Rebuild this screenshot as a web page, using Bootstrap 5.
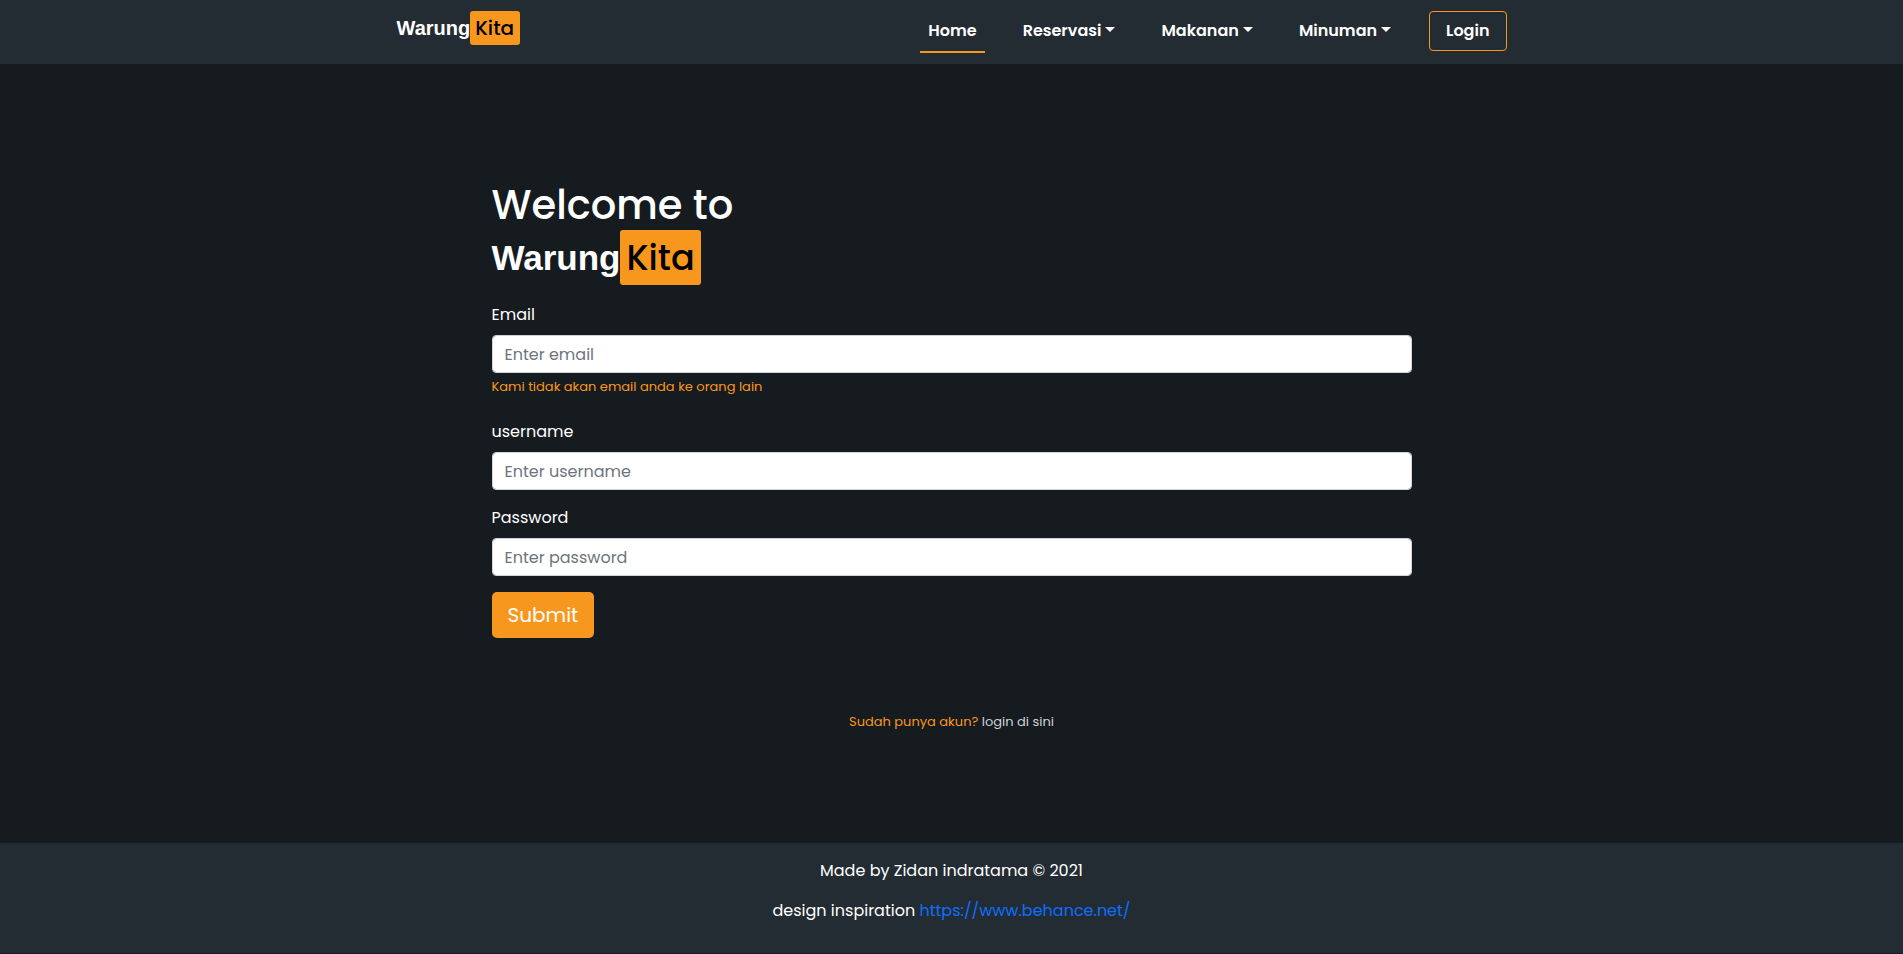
<!DOCTYPE html>
<html lang="id">
<head>
<meta charset="utf-8">
<meta name="viewport" content="width=device-width, initial-scale=1">
<title>WarungKita</title>
<link href="https://cdn.jsdelivr.net/npm/bootstrap@5.3.0/dist/css/bootstrap.min.css" rel="stylesheet">
<style>
  :root { --wk-orange: #f8971e; --wk-panel: #242c33; --wk-dark: #161b1f; }
  body {
    font-family: Poppins, Inter, sans-serif;
    font-size: 16px; line-height: 24px;
    background: var(--wk-dark); color: #fff;
  }
  .site-width { max-width: 1140px; --bs-gutter-x: 30px; }
  .site-nav { background: var(--wk-panel); padding: 11px 0; }
  .site-nav .navbar-nav { gap: 30px; }
  .site-nav .nav-link { color: #fff; font-weight: 600; border-bottom: 2px solid transparent; }
  .site-nav .nav-link:hover, .site-nav .nav-link.active { color: #fff; border-color: var(--wk-orange); }
  .site-nav .dropdown-toggle::after { margin-left: 4px; border-width: 5px 5px 0; }
  .btn-login { color: #fff; font-weight: 600; line-height: 24px; border: 1px solid var(--wk-orange); padding: 7px 16px; border-radius: 4px; }
  .btn-login:hover { background: var(--wk-orange); color: #000; }
  .brand { font-family: "Liberation Sans", Arial, sans-serif; font-weight: 700; font-size: 20px; line-height: 30px; color: #fff; text-decoration: none; }
  .brand-tag { display: inline-block; font-family: Poppins, Inter, sans-serif; font-weight: 500; color: #000; background: var(--wk-orange); padding: 2px 6px 2px 5px; border-radius: 3px; }
  .brand-lg { font-size: 35px; line-height: 51px; margin: 1px 0 18px; }
  .brand-lg .brand-tag { padding: 2px 6px; }
  .welcome { font-size: 40px; line-height: 48px; font-weight: 500; }
  .main-area { padding-top: 117px; padding-bottom: 112px; }
  .main-area .row { --bs-gutter-x: 30px; }
  .form-control, .form-control:focus { height: 38px; border-color: #ced4da; border-radius: 4px; font-size: 16px; }
  .form-control::placeholder { color: #6c757d; }
  .hint { color: var(--wk-orange); font-size: 13px; line-height: 19px; }
  .btn-submit, .btn-submit:hover { background: var(--wk-orange); color: #fff; font-size: 20px; line-height: 30px; padding: 8px 16px; border: 0; border-radius: 5px; }
  .account-note { margin: 74px 0 0; }
  .login-link { color: #ced4da; text-decoration: none; }
  .site-footer { background: var(--wk-panel); padding: 16px 0 14px; }
  .site-footer a { color: #0d6efd; text-decoration: none; }
</style>
</head>
<body>
<nav class="navbar navbar-expand-lg site-nav">
  <div class="container site-width align-items-start">
    <a class="brand d-flex align-items-center" href="#"><span>Warung</span><span class="brand-tag">Kita</span></a>
    <ul class="navbar-nav ms-auto flex-row flex-wrap align-items-start">
      <li class="nav-item"><a class="nav-link active" aria-current="page" href="#">Home</a></li>
      <li class="nav-item dropdown"><a class="nav-link dropdown-toggle" href="#" role="button" data-bs-toggle="dropdown">Reservasi</a></li>
      <li class="nav-item dropdown"><a class="nav-link dropdown-toggle" href="#" role="button" data-bs-toggle="dropdown">Makanan</a></li>
      <li class="nav-item dropdown"><a class="nav-link dropdown-toggle" href="#" role="button" data-bs-toggle="dropdown">Minuman</a></li>
      <li class="nav-item"><button type="button" class="btn btn-login">Login</button></li>
    </ul>
  </div>
</nav>
<main class="container site-width main-area">
  <div class="row justify-content-center">
    <div class="col-10">
      <h1 class="welcome mb-0">Welcome to</h1>
      <div class="brand brand-lg d-flex align-items-center"><span>Warung</span><span class="brand-tag">Kita</span></div>
      <form>
        <div class="mb-4">
          <label class="d-block mb-2" for="email">Email</label>
          <input type="email" class="form-control" id="email" placeholder="Enter email" aria-describedby="emailHint">
          <div id="emailHint" class="hint mt-1">Kami tidak akan email anda ke orang lain</div>
        </div>
        <div class="mb-3">
          <label class="d-block mb-2" for="username">username</label>
          <input type="text" class="form-control" id="username" placeholder="Enter username">
        </div>
        <div class="mb-3">
          <label class="d-block mb-2" for="password">Password</label>
          <input type="password" class="form-control" id="password" placeholder="Enter password">
        </div>
        <button type="submit" class="btn btn-submit">Submit</button>
      </form>
      <p class="hint account-note text-center">Sudah punya akun? <a class="login-link" href="#">login di sini</a></p>
    </div>
  </div>
</main>
<footer class="site-footer text-center">
  <p class="mb-3">Made by Zidan indratama © 2021</p>
  <p class="mb-3">design inspiration <a href="https://www.behance.net/">https://www.behance.net/</a></p>
</footer>
<script src="https://cdn.jsdelivr.net/npm/bootstrap@5.3.0/dist/js/bootstrap.bundle.min.js"></script>
</body>
</html>
